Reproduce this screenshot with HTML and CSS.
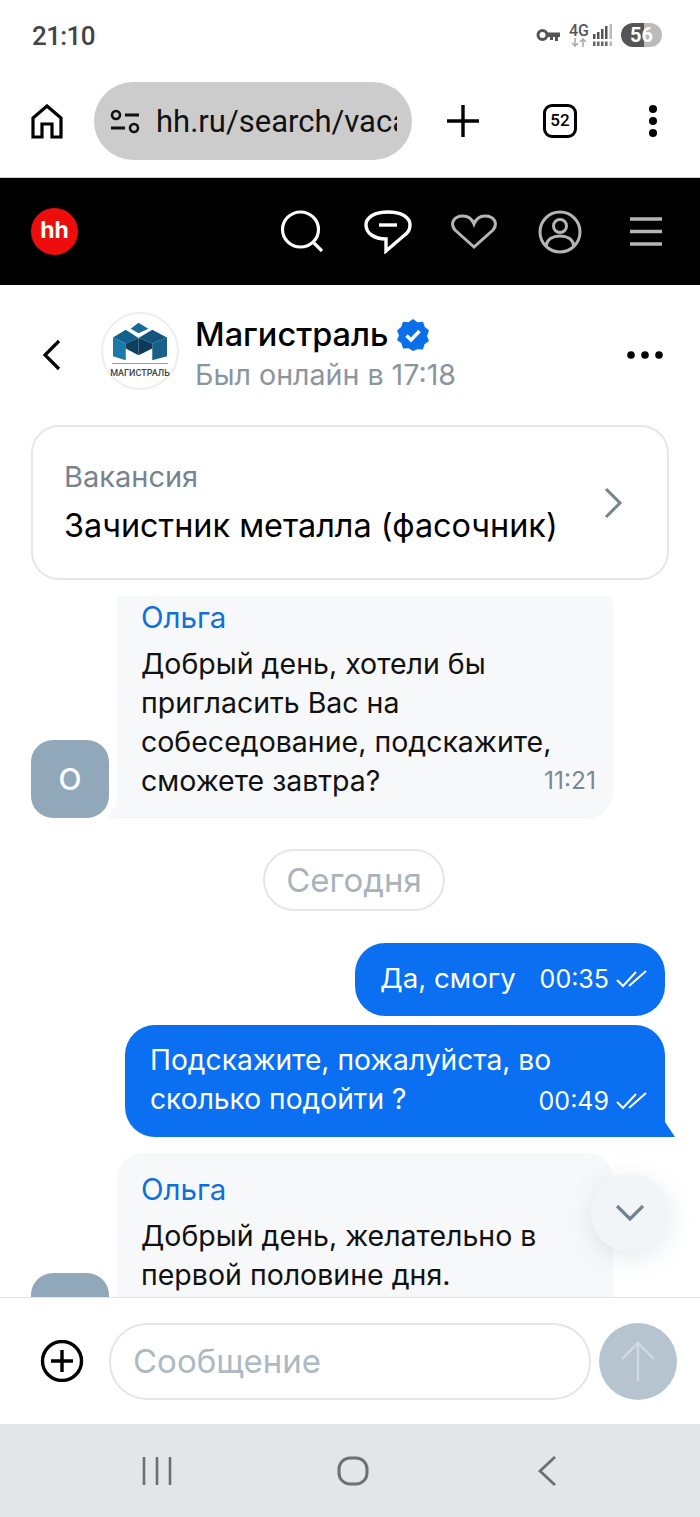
FILE: index.html
```html
<!DOCTYPE html>
<html lang="ru">
<head>
<meta charset="utf-8">
<title>Магистраль</title>
<link rel="stylesheet" href="styles.css">
</head>
<body>
<div class="screen">
  <div class="status">
    <span class="clock">21:10</span>
    <div class="status-icons">
      <svg class="key" width="25" height="14" viewBox="0 0 25 14"><circle cx="6.500" cy="7" r="4.500" fill="none" stroke="#555" stroke-width="3"/><path d="M11 4.500h13v4.500h-2v4h-3V9h-2v3h-3V9h-3z" fill="#555"/></svg>
      <div class="net"><span>4G</span><svg width="18" height="9" viewBox="0 0 18 9"><path d="M5 0v8M2 5l3 3 3-3M13 9V1M10 4l3-3 3 3" fill="none" stroke="#aaa" stroke-width="1.500"/></svg></div>
      <svg class="signal" width="21" height="24" viewBox="0 0 21 24"><path d="M1 11h2.500v5H1zM5 9h2.500v7H5zM9 6h2.500v10H9zM13 3h2.500v13H13z" fill="#555"/><path d="M17.500 1H20v15h-2.500z" fill="#bbb"/><path d="M1 18.500h2.500V23H1zM5 18.500h2.500V23H5zM9 18.500h2.500V23H9zM13 18.500h2.500V23H13z" fill="#666"/><path d="M17.500 18.500H20V23h-2.500z" fill="#bbb"/></svg>
      <div class="battery"><span>56</span></div>
    </div>
  </div>

  <div class="browser">
    <svg class="home" width="32" height="35" viewBox="0 0 32 35"><path d="M2 33V14L16 2l14 12v19h-9V20H11v13z" fill="none" stroke="#000" stroke-width="3.200"/></svg>
    <div class="url">
      <svg width="30" height="25" viewBox="0 0 30 25"><circle cx="6" cy="6" r="4" fill="none" stroke="#111" stroke-width="2.600"/><path d="M15 6h14M1 19h14" stroke="#111" stroke-width="2.800"/><circle cx="24" cy="19" r="4" fill="none" stroke="#111" stroke-width="2.600"/></svg>
      <span class="url-text">hh.ru/search/vacancy</span>
    </div>
    <svg class="plus" width="32" height="32" viewBox="0 0 32 32"><path d="M16 0v32M0 16h32" stroke="#000" stroke-width="3.400"/></svg>
    <div class="tabs">52</div>
    <svg class="kebab" width="10" height="34" viewBox="0 0 10 34"><circle cx="5" cy="5" r="4"/><circle cx="5" cy="17" r="4"/><circle cx="5" cy="29" r="4"/></svg>
  </div>

  <header class="site">
    <div class="hh">hh</div>
    <div class="site-icons">
      <span class="slot"><svg width="46" height="44" viewBox="0 0 46 44"><ellipse cx="21.500" cy="19.500" rx="18" ry="17.500" fill="none" stroke="#fff" stroke-width="3.200"/><path d="M35 33l8 8" stroke="#fff" stroke-width="3.200"/></svg></span>
      <span class="slot"><svg width="48" height="44" viewBox="0 0 48 44"><path d="M22 29v12L40 25.500C44 23 46 19 46 15 46 7 37 2 24 2 11 2 2 7 2 15c0 8 8 14 20 14z" fill="none" stroke="#fff" stroke-width="3.400"/><path d="M15 15h18" stroke="#fff" stroke-width="3.400"/></svg></span>
      <span class="slot"><svg width="48" height="36" viewBox="0 0 48 36"><path d="M24 33L5 16C0 10 3 2 13 2c5 0 9 3 11 8 2-5 6-8 11-8 10 0 13 8 8 14z" fill="none" stroke="#b5b5b5" stroke-width="3"/></svg></span>
      <span class="slot"><svg width="44" height="44" viewBox="0 0 44 44"><circle cx="22" cy="22" r="20" fill="none" stroke="#b5b5b5" stroke-width="3"/><circle cx="22" cy="16" r="6.500" fill="none" stroke="#b5b5b5" stroke-width="3"/><path d="M8 36c1-7 7-10 14-10s13 3 14 10" fill="none" stroke="#b5b5b5" stroke-width="3"/></svg></span>
      <span class="slot"><svg width="32" height="30" viewBox="0 0 32 30"><path d="M0 2h32M0 14.500h32M0 27h32" stroke="#b5b5b5" stroke-width="3.400"/></svg></span>
    </div>
  </header>

  <div class="chat-head">
    <svg class="back" width="20" height="32" viewBox="0 0 20 32"><path d="M17 2L3 16l14 14" fill="none" stroke="#000" stroke-width="3.200"/></svg>
    <div class="logo">
      <svg width="56" height="40" viewBox="7 7 55 39">
        <path d="M25 13l8-6 10 6-10 4.500z" fill="#1a6a95"/>
        <path d="M7 22l13-8 13 8.500-13 5.500z" fill="#14608c"/>
        <path d="M7 22l13 6v17L7 41z" fill="#1c79a8"/>
        <path d="M20 28l13-5.500V40l-13-7z" fill="#0d3f60"/>
        <path d="M62 22l-15-8-14 8.500 14 5.500z" fill="#12557f"/>
        <path d="M62 22l-15 6v17l15-4z" fill="#185f8a"/>
        <path d="M47 28l-14-5.500V40l14-7z" fill="#0c3a58"/>
      </svg>
      <span class="logo-rule"></span>
      <span class="logo-name">МАГИСТРАЛЬ</span>
    </div>
    <div class="who">
      <div class="who-name">Магистраль
        <svg class="verified" width="32" height="32" viewBox="0 0 32 32"><path d="M16 0l4.500 3.200 5.500-.4 1.800 5.200 4.200 3.500L30 17l2 5-4.500 3.200-1.500 5.300-5.500-.2L16 32l-4.500-2.700-5.500.2-1.500-5.300L0 21l2-4.500L0 11.500 4.200 8 6 2.800l5.500.4z" fill="#0a6fe8"/><path d="M9.500 16.500l4.500 4.500 8.500-9" fill="none" stroke="#fff" stroke-width="3.400"/></svg>
      </div>
      <div class="who-sub">Был онлайн в 17:18</div>
    </div>
    <svg class="more" width="36" height="8" viewBox="0 0 36 8"><circle cx="4" cy="4" r="3.800"/><circle cx="18" cy="4" r="3.800"/><circle cx="32" cy="4" r="3.800"/></svg>
  </div>

  <div class="vacancy">
    <div>
      <div class="vac-label">Вакансия</div>
      <div class="vac-title">Зачистник металла (фасочник)</div>
    </div>
    <svg width="20" height="32" viewBox="0 0 20 32"><path d="M3 2l14 14L3 30" fill="none" stroke="#76848f" stroke-width="3"/></svg>
  </div>

  <main class="feed">
    <div class="row row-first">
      <div class="avatar">О</div>
      <div class="bubble in">
        <div class="author">Ольга</div>
        <div class="text">Добрый день, хотели бы<br>пригласить Вас на<br>собеседование, подскажите,<br>сможете завтра?</div>
        <span class="time in-time">11:21</span>
      </div>
    </div>
    <div class="day">Сегодня</div>
    <div class="bubble out out-short">
      <span class="text">Да, смогу</span>
      <span class="out-meta">00:35 <svg width="32" height="18" viewBox="0 0 32 18"><path d="M1 10l6 6L20 2M13 16L30 1" fill="none" stroke="#fff" stroke-width="2"/></svg></span>
    </div>
    <div class="bubble out out-long">
      <div class="text">Подскажите, пожалуйста, во<br>сколько подойти ?</div>
      <span class="out-meta abs">00:49 <svg width="32" height="18" viewBox="0 0 32 18"><path d="M1 10l6 6L20 2M13 16L30 1" fill="none" stroke="#fff" stroke-width="2"/></svg></span>
    </div>
    <div class="row">
      <div class="avatar"></div>
      <div class="bubble in in-last">
        <div class="author">Ольга</div>
        <div class="text">Добрый день, желательно в<br>первой половине дня.</div>
      </div>
    </div>
    <div class="scroll-down"><svg width="30" height="18" viewBox="0 0 30 18"><path d="M2 2l13 13L28 2" fill="none" stroke="#74848f" stroke-width="3.200"/></svg></div>
  </main>

  <div class="composer">
    <svg class="attach" width="44" height="42" viewBox="0 0 44 42"><circle cx="22" cy="21" r="19.500" fill="none" stroke="#000" stroke-width="3.400"/><path d="M22 10v22M11 21h22" stroke="#000" stroke-width="3.400"/></svg>
    <div class="input">Сообщение</div>
    <div class="send"><svg width="36" height="40" viewBox="0 0 36 40"><path d="M18 40V2M2 18L18 2l16 16" fill="none" stroke="#d2dae1" stroke-width="2.400"/></svg></div>
  </div>

  <nav class="sysnav">
    <svg width="30" height="30" viewBox="0 0 30 30"><path d="M2 1v28M15 1v28M28 1v28" stroke="#6f6f72" stroke-width="2.600"/></svg>
    <svg class="nav-home" width="32" height="30" viewBox="0 0 32 30"><rect x="2" y="2" width="28" height="26" rx="11" fill="none" stroke="#6f6f72" stroke-width="3"/></svg>
    <svg width="20" height="30" viewBox="0 0 20 30"><path d="M18 1L3 15l15 14" fill="none" stroke="#6f6f72" stroke-width="2.800"/></svg>
  </nav>
</div>
</body>
</html>
```
FILE: styles.css
```css
* { box-sizing: border-box; }
html, body { margin: 0; padding: 0; background: #fff; }
.screen { width: 700px; height: 1517px; overflow: hidden; display: flex; flex-direction: column; font-family: Inter, "Liberation Sans", sans-serif; color: #000; }
.status { height: 70px; flex: none; display: flex; align-items: center; justify-content: space-between; padding: 0 38px 0 32px; }
.clock { font: 500 26px Roboto, sans-serif; color: #444; letter-spacing: -.6px; margin-top: 2px; }
.status-icons { display: flex; align-items: center; }
.net { display: flex; flex-direction: column; align-items: center; width: 20px; margin: 0 3px 0 8px; font: 500 16px/14px Roboto, sans-serif; color: #555; }
.net svg { display: block; }
.signal { margin-right: 8px; }
.battery { width: 41px; height: 24px; border-radius: 12px; background: linear-gradient(90deg, #555 0 55%, #bbb 55%); color: #fff; font: 700 20px/24px Roboto, sans-serif; text-align: center; }
.browser { height: 108px; flex: none; display: flex; align-items: center; padding: 0 0 5px 31px; border-bottom: 1px solid #d0d0d0; }
.home { flex: none; margin-right: 31px; }
.url { width: 318px; height: 78px; flex: none; border-radius: 39px; background: #cccccd; display: flex; align-items: center; padding: 0 15px 0 16px; gap: 16px; overflow: hidden; }
.url svg { flex: none; }
.url-text { font: 400 31px Roboto, sans-serif; color: #111; white-space: nowrap; overflow: hidden; }
.plus { flex: none; margin-left: 35px; }
.tabs { flex: none; margin-left: 64px; width: 34px; height: 34px; border: 3.500px solid #000; border-radius: 9px; font: 500 17px/27px Roboto, sans-serif; text-align: center; }
.kebab { flex: none; margin-left: 71px; }
.site { height: 107px; flex: none; background: #000; display: flex; align-items: center; justify-content: space-between; padding: 0 11px 0 31px; }
.hh { width: 47px; height: 47px; border-radius: 50%; background: #ee0d0d; color: #fff; font: 700 23px/45px Inter, sans-serif; text-align: center; }
.site-icons { display: flex; }
.slot { width: 86px; display: flex; justify-content: center; align-items: center; }
.chat-head { height: 140px; flex: none; display: flex; align-items: center; padding: 0 37px 0 42px; }
.back { flex: none; margin-right: 39px; }
.logo { width: 78px; height: 78px; flex: none; border: 2px solid #eceef0; border-radius: 50%; display: flex; flex-direction: column; align-items: center; padding-top: 8px; margin: 0 16px 8px 0; }
.logo svg { display: block; flex: none; width: 54px; height: 40px; }
.logo-rule { width: 56px; height: 1px; background: #999; margin-top: 1px; flex: none; }
.logo-name { font: 500 9px/12px Roboto, sans-serif; color: #444; margin-top: 3px; white-space: nowrap; }
.who { flex: 1; margin-bottom: 1px; }
.who-name { display: flex; align-items: center; gap: 8px; font-size: 32.500px; font-weight: 500; line-height: 40px; }
.verified { flex: none; }
.who-sub { font-size: 28.600px; line-height: 40px; color: #8a959e; }
.more { flex: none; }
.vacancy { flex: none; height: 155px; margin: 0 31px 16px 31px; border: 2px solid #e4e7ea; border-radius: 28px; display: flex; align-items: center; justify-content: space-between; padding: 0 44px 0 31px; }
.vac-label { font-size: 29px; line-height: 40px; color: #76848f; }
.vac-title { font-size: 32.400px; line-height: 46px; margin-top: 6px; }
.feed { position: relative; flex: 1; min-height: 0; overflow: hidden; padding: 0 35px 0 31px; display: flex; flex-direction: column; border-bottom: 1px solid #dfe3e6; }
.row { flex: none; display: flex; align-items: flex-end; gap: 8px; }
.row-first { margin-top: -15px; }
.avatar { width: 78px; height: 78px; flex: none; border-radius: 22px; background: #91a7ba; color: #fff; font-size: 30px; font-weight: 500; display: flex; align-items: center; justify-content: center; }
.bubble { position: relative; flex: none; }
.in { width: 496px; background: #f7f8f9; border-radius: 26px 26px 26px 0; padding: 16px 20px 17px 24px; border-bottom: 1px solid #eff1f2; }
.in::after { content: ""; position: absolute; left: -10px; bottom: -1px; width: 12px; height: 16px; background: #f7f8f9; clip-path: polygon(100% 0, 100% 100%, 0 100%); }
.in-last { height: 198px; }
.author { font-size: 29.500px; line-height: 40px; color: #0f70d8; }
.text { font-size: 28.500px; line-height: 39px; color: #111; }
.in .author { margin-bottom: 7px; }
.time { font-size: 24.500px; color: #7b8892; }
.in-time { position: absolute; right: 17px; bottom: 22px; }
.day { flex: none; align-self: flex-start; margin: 31px 0 32px 232px; height: 62px; width: 182px; border: 2px solid #e4e7ea; border-radius: 31px; font-size: 33px; line-height: 58px; text-align: center; color: #a9b3bb; }
.out { background: #0a6ff0; align-self: flex-end; }
.out .text { color: #fff; font-size: 28.200px; }
.out-short { width: 310px; height: 73px; border-radius: 30px; display: flex; align-items: center; justify-content: space-between; padding: 0 17px 2px 25px; }
.out-short .text { font-size: 27.700px; }
.out-long { width: 540px; height: 112px; margin-top: 9px; margin-bottom: 16px; border-radius: 30px 30px 0 30px; padding: 16px 25px; }
.out-long::after { content: ""; position: absolute; right: -10px; bottom: 0; width: 12px; height: 18px; background: #0a6ff0; clip-path: polygon(0 0, 100% 100%, 0 100%); }
.out-meta { display: flex; align-items: center; gap: 7px; color: #fff; font-size: 25px; white-space: nowrap; }
.abs { position: absolute; right: 17px; bottom: 21px; }
.scroll-down { position: absolute; right: 31px; top: 578px; width: 78px; height: 78px; border-radius: 50%; background: #f2f5f8; box-shadow: 0 6px 26px rgba(90, 110, 135, .16); display: flex; align-items: center; justify-content: center; }
.composer { height: 126px; flex: none; display: flex; align-items: center; padding: 0 23px 0 40px; background: #fff; }
.attach { flex: none; margin-right: 25px; }
.input { width: 482px; height: 77px; flex: none; border: 2px solid #e3e6e9; border-radius: 38px; padding-left: 22px; font-size: 33px; line-height: 73px; color: #adb9c3; }
.send { width: 78px; height: 77px; flex: none; margin-left: 8px; border-radius: 50%; background: #b6c4d0; display: flex; align-items: center; justify-content: center; }
.sysnav { height: 93px; flex: none; background: #e4e5e7; display: flex; align-items: center; padding-left: 142px; }
.nav-home { margin: 0 168px 0 165px; }
```
